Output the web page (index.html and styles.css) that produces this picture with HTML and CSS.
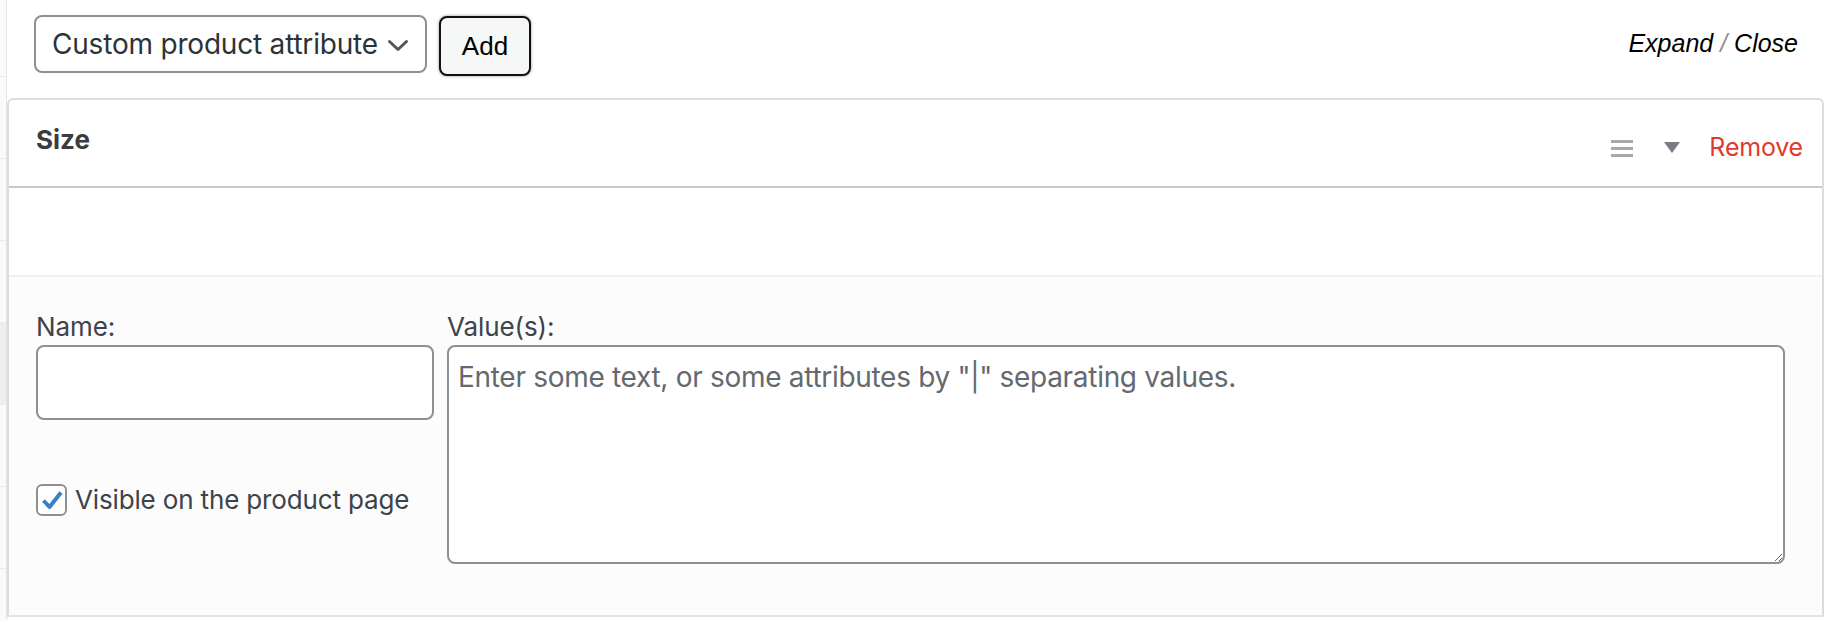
FILE: index.html
```html
<!DOCTYPE html>
<html lang="en">
<head>
<meta charset="utf-8">
<title>Product attributes</title>
<link rel="stylesheet" href="styles.css">
</head>
<body>
<div class="page">
  <aside class="tabs">
    <div class="tab tab-first"></div>
    <div class="tab"></div>
    <div class="tab"></div>
    <div class="tab"></div>
    <div class="tab tab-active"></div>
    <div class="tab"></div>
    <div class="tab"></div>
  </aside>
  <main class="main">
    <div class="toolbar">
      <div class="select">
        <span class="select-text">Custom product attribute</span>
        <svg class="chevron" width="22" height="13" viewBox="0 0 22 13"><path d="M2.5 2.5 L11 10.5 L19.5 2.5" fill="none" stroke="#50575e" stroke-width="3" stroke-linecap="round" stroke-linejoin="round"/></svg>
      </div>
      <button class="btn-add" type="button">Add</button>
      <div class="toggle"><a class="toggle-link">Expand</a><span class="toggle-sep"> / </span><a class="toggle-link">Close</a></div>
    </div>
    <section class="attr">
      <header class="attr-head">
        <h3 class="attr-title">Size</h3>
        <div class="attr-actions">
          <span class="handle"><span class="bar"></span><span class="bar"></span><span class="bar"></span></span>
          <svg class="caret" width="16" height="11" viewBox="0 0 16 11"><path d="M0 0 H16 L8 11 Z" fill="#787c82"/></svg>
          <a class="remove">Remove</a>
        </div>
      </header>
      <div class="attr-body">
        <div class="attr-blank"></div>
        <div class="fields">
          <div class="col-name">
            <label class="label">Name:</label>
            <input class="input" type="text">
            <div class="visible">
              <span class="checkbox"><svg width="22" height="20" viewBox="0 0 22 20"><path d="M2.5 10.5 L8.5 17 L20 2.5" fill="none" stroke="#3582c4" stroke-width="4" stroke-linejoin="round"/></svg></span>
              <span class="visible-text">Visible on the product page</span>
            </div>
          </div>
          <div class="col-value">
            <label class="label">Value(s):</label>
            <textarea class="textarea" placeholder="Enter some text, or some attributes by &quot;|&quot; separating values."></textarea>
          </div>
        </div>
      </div>
    </section>
  </main>
</div>
</body>
</html>
```
FILE: styles.css
```css
html, body {
  margin: 0;
  padding: 0;
  background: #ffffff;
}
body {
  font-family: Inter, "Noto Sans", sans-serif;
  color: #3c434a;
  width: 1826px;
  height: 620px;
  overflow: hidden;
}
.page {
  display: flex;
  height: 620px;
}
.tabs {
  width: 6px;
  flex: none;
  background: #fafafa;
  border-right: 1px solid #e6e6e6;
  display: flex;
  flex-direction: column;
}
.tab {
  height: 81px;
  border-bottom: 1px solid #eaeaea;
  flex: none;
}
.tab-first {
  height: 76px;
}
.tab-active {
  background: #eeeeee;
}
.main {
  flex: 1;
  display: flex;
  flex-direction: column;
  min-width: 0;
}
.toolbar {
  height: 98px;
  box-sizing: border-box;
  padding: 15px 26px 0 27px;
  display: flex;
  align-items: flex-start;
}
.select {
  width: 393px;
  height: 58px;
  box-sizing: border-box;
  border: 2px solid #8c8f94;
  border-radius: 8px;
  padding: 0 16px 0 16px;
  display: flex;
  align-items: center;
  justify-content: space-between;
  background: #fff;
}
.select-text {
  font-size: 28px;
  color: #2c3338;
  white-space: nowrap;
  letter-spacing: -0.2px;
}
.chevron {
  flex: none;
  margin-top: 2px;
}
.btn-add {
  margin: 1px 0 0 12px;
  width: 92px;
  height: 60px;
  box-sizing: border-box;
  border: 2px solid #111;
  border-radius: 8px;
  background: #f6f7f7;
  box-shadow: 0 0 3px rgba(0, 0, 0, 0.45);
  font-family: "Liberation Sans", Arial, sans-serif;
  font-size: 26px;
  color: #000;
  padding: 0;
}
.toggle {
  margin-left: auto;
  margin-top: 13px;
  margin-right: 2px;
  font-family: "Liberation Sans", Arial, sans-serif;
  font-style: italic;
  font-size: 25px;
  line-height: 30px;
  color: #000;
  white-space: nowrap;
}
.toggle-sep {
  color: #8c8f94;
}
.attr {
  margin-right: 2px;
  border: 2px solid #dcdcde;
  border-radius: 6px 6px 0 0;
  display: flex;
  flex-direction: column;
  height: 519px;
  box-sizing: border-box;
  border-bottom-color: #e4e4e4;
}
.attr-head {
  height: 88px;
  box-sizing: border-box;
  border-bottom: 2px solid #c8c9cc;
  display: flex;
  justify-content: space-between;
  align-items: flex-start;
  padding: 0 19px 0 27px;
}
.attr-title {
  margin: 25px 0 0 0;
  font-size: 26px;
  line-height: 30px;
  font-weight: 700;
  color: #3c3c3c;
}
.attr-actions {
  margin-top: 32px;
  height: 30px;
  display: flex;
  align-items: center;
}
.handle {
  width: 22px;
  display: flex;
  flex-direction: column;
  gap: 4px;
  margin-top: 3px;
}
.bar {
  display: block;
  height: 3px;
  background: #a7aaad;
}
.caret {
  margin-left: 31px;
  margin-top: 1px;
}
.remove {
  margin-left: 29px;
  font-size: 25px;
  line-height: 30px;
  color: #e3392b;
  letter-spacing: -0.2px;
}
.attr-body {
  flex: 1;
  display: flex;
  flex-direction: column;
}
.attr-blank {
  height: 87px;
  border-bottom: 2px solid #f0f0f1;
  background: #fff;
}
.fields {
  flex: 1;
  background: #fcfcfc;
  display: flex;
  gap: 13px;
  padding: 32px 37px 0 27px;
}
.col-name {
  width: 398px;
  flex: none;
  display: flex;
  flex-direction: column;
}
.col-value {
  flex: 1;
  display: flex;
  flex-direction: column;
}
.label {
  font-size: 26px;
  line-height: 36px;
  color: #3c434a;
  letter-spacing: -0.1px;
}
.input {
  height: 75px;
  box-sizing: border-box;
  border: 2px solid #8c8f94;
  border-radius: 8px;
  background: #fff;
  margin: 0;
  padding: 0 12px;
  font-family: inherit;
  font-size: 28px;
}
.textarea {
  height: 219px;
  box-sizing: border-box;
  border: 2px solid #8c8f94;
  border-radius: 8px;
  background: #fff;
  margin: 0;
  padding: 12px 9px;
  font-family: Inter, "Noto Sans", sans-serif;
  font-size: 28px;
  line-height: 36px;
  letter-spacing: -0.3px;
  resize: vertical;
  color: #2c3338;
}
.textarea::placeholder {
  color: #646970;
  opacity: 1;
}
.visible {
  margin-top: 64px;
  display: flex;
  align-items: center;
  height: 32px;
}
.checkbox {
  width: 31px;
  height: 32px;
  box-sizing: border-box;
  border: 2px solid #8c8f94;
  border-radius: 6px;
  background: #fff;
  display: flex;
  align-items: center;
  justify-content: center;
  flex: none;
}
.checkbox svg {
  display: block;
  margin-top: -1px;
}
.visible-text {
  margin-left: 8px;
  font-size: 26px;
  line-height: 36px;
  color: #3c434a;
  letter-spacing: -0.15px;
  white-space: nowrap;
}
```
